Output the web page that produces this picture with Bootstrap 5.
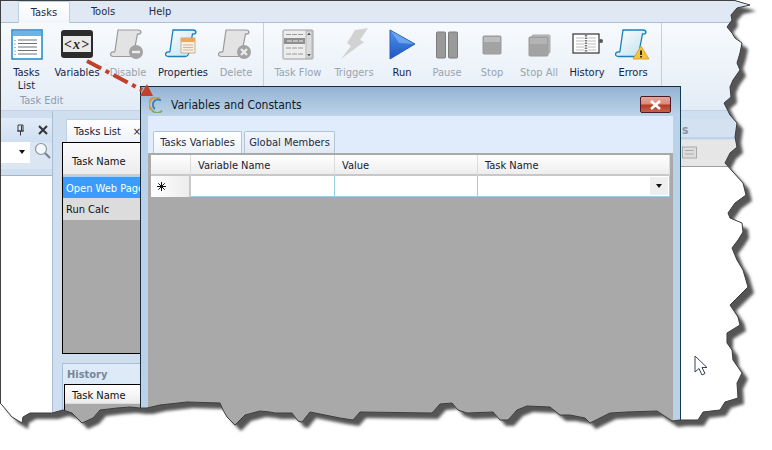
<!DOCTYPE html>
<html lang="en">
<head>
  <meta charset="UTF-8" />
  <meta name="viewport" content="width=device-width, initial-scale=1" />
  <title>Variables and Constants</title>
  <link href="https://cdn.jsdelivr.net/npm/bootstrap@5.3.0/dist/css/bootstrap.min.css" rel="stylesheet" />
  <style>
    body { background: #fff; font-family: "DejaVu Sans Condensed", "Liberation Sans", Arial, sans-serif; font-size: 11px; color: #15233c; overflow: hidden; }
    .shot { width: 772px; height: 450px; overflow: hidden; }
    .app-win { width: 745px; height: 440px; border-top: 1px solid #444; border-left: 1px solid #444; background: #d0dff0; }

    .rib-tabs { height: 22px; padding-left: 17px; background: #dfe8f3; border-bottom: 1px solid #a9c0d9; flex-wrap: nowrap; }
    .rib-tab { height: 22px; line-height: 21px; font-size: 11px; color: #1d2c4a; text-align: center; }
    .rib-tab.on { width: 52px; background: linear-gradient(#fff, #f2f6fb); border: 1px solid #bccfe3; border-bottom: 0; border-radius: 2px 2px 0 0; }
    .rib-tab.w-tools { width: 66px; }
    .rib-tab.w-help { width: 48px; }

    .rib-body { height: 88px; background: linear-gradient(#f7fafd, #e3ecf6); border-bottom: 1px solid #c3d2e3; }
    .rib-group { height: 87px; border-right: 1px solid #c3d2e3; flex: none; }
    .rib-group-a { width: 263px; }
    .rib-group-b { width: 398px; }
    .rib-btn { height: 68px; padding: 4px 0 0; border: 0; border-radius: 0; font-size: 11px; line-height: 13px; color: #16244a; flex: none; }
    .rib-btn:disabled { color: #9aa3ae; opacity: 1; }
    .rib-btn svg { display: block; margin: 0 auto 3px; width: 36px; height: 36px; flex: none; }
    .rib-caption { color: #8d9cb0; font-size: 11px; padding: 2px 0 0 19px; }

    .dock-left { width: 52px; flex: none; padding-top: 7px; border-right: 1px solid #a9bdd5; }
    .dock-head { height: 24px; background: linear-gradient(#e2ecf8, #cfdff1); color: #333; font-size: 14px; }
    .pin-gap { margin-left: 13px; }
    .dock-tools { height: 27px; background: #dbe6f3; }
    .dock-field { height: 21px; width: 29px; background: #fff; }
    .dock-list { background: #fff; margin-top: 6px; border-top: 1px solid #a9b4c0; height: 300px; }
    .dock-caret { width: 0; height: 0; border: 3.5px solid transparent; border-top: 4px solid #111; border-bottom: 0; margin: 8px 0 0 18px; }

    .dock-mid { flex: 1 1 auto; padding: 8px 0 0 9px; min-width: 0; }
    .tab-one { width: 84px; height: 23px; margin-left: 4px; padding: 4px 0 0 7px; font-size: 11px; color: #223; background: linear-gradient(#fff, #eef4fb); border: 1px solid #bcd0e6; border-bottom: 0; border-radius: 2px 2px 0 0; }
    .grid-main { height: 212px; background: #a9a9a9; border: 1px solid #000; }
    .cell-head { height: 33px; padding: 11px 0 0 9px; font-size: 11px; background: linear-gradient(#fbfbfb, #ececec); border-bottom: 2px solid #ccc; color: #111; }
    .cell-sel { height: 22px; line-height: 23px; padding-left: 3px; background: #3c9bff; color: #fff; font-size: 11px; border-top: 1px solid #a9d4ff; }
    .cell-row { height: 22px; line-height: 23px; padding-left: 3px; background: #dcdcdc; font-size: 11px; color: #111; }
    .hist-box { margin-top: 9px; height: 80px; border: 1px solid #a8bdd6; background: linear-gradient(#dfebf8, #d4e2f2); padding: 0 0 0 1px; }
    .hist-title { height: 20px; line-height: 21px; padding-left: 3px; font-weight: 700; color: #77879b; font-size: 11px; }
    .hist-grid { height: 60px; background: #a9a9a9; border-top: 1px solid #000; border-left: 1px solid #000; }
    .hist-head { height: 19px; padding: 3px 0 0 7px; font-size: 11px; background: linear-gradient(#fff, #ececec); color: #111; border-bottom: 1px solid #ddd; }

    .dock-right { width: 64px; flex: none; padding-top: 8px; }
    .right-head { height: 20px; background: #d3e1f1; color: #8a94a3; font-size: 12px; font-weight: 700; line-height: 23px; padding-left: 1px; border-bottom: 2px solid #c0d2e6; }
    .right-tools { height: 26px; margin-top: 1px; background: #e6e6e6; padding-top: 6px; }
    .right-fill { height: 300px; background: #fff; border-top: 1px solid #a0a0a0; }

    .dlg { position: absolute; left: 140px; top: 86px; width: 541px; height: 345px; border: 1px solid #1b2a38; border-bottom: 0; border-right-color: #0f3d4f; background: #b9d2ea; }
    .dlg-title { height: 29px; padding: 6px 9px 0 8px; background: linear-gradient(#94b3d2, #bdd4ea); font-size: 12px; color: #101a28; }
    .dlg-logo { margin-right: 6px; flex: none; }
    .dlg-close { width: 31px; height: 17px; padding: 0; border: 1px solid #4b1a24; border-radius: 2px; background: linear-gradient(#e3a79d 0%, #d98a7a 48%, #b23a22 52%, #c9604a 100%); }
    .dlg-client { margin: 0 7px; height: 315px; background: #e0ebfb; padding-top: 15px; }
    .dlg-tabs { padding-left: 5px; height: 22px; flex-wrap: nowrap; }
    .dlg-tab { height: 22px; line-height: 21px; font-size: 11px; color: #1c2c44; text-align: center; border: 1px solid #b3c4d8; border-bottom: 0; border-radius: 2px 2px 0 0; background: linear-gradient(#f1f5fb, #e2e9f3); }
    .dlg-tab.on { width: 89px; background: linear-gradient(#fff, #edf3fb); }
    .dlg-tab.off { width: 91px; margin-left: 2px; }
    .dlg-grid { height: 280px; background: #a9a9a9; border: 3px solid #a9a9a9; border-top: 2px solid #a9a9a9; }
    .var-table { table-layout: fixed; width: 519px; border-collapse: separate; border-spacing: 0; --bs-table-bg: transparent; }
    .var-table th, .var-table td { padding: 0 !important; border: 0; box-shadow: none !important; font-size: 11px; line-height: 13px; color: #14202f; vertical-align: middle; }
    .var-table th { height: 21px; font-weight: 400; padding-left: 7px !important; padding-top: 1px !important; background: linear-gradient(#fff, #ededed) !important; border-bottom: 2px solid #c8c8c8 !important; border-right: 1px solid #dcdcdc !important; }
    .var-table td { height: 21px; background: #fff !important; border-bottom: 1px solid #9ccfe0 !important; border-right: 1px solid #9ccfe0 !important; }
    .var-table td.mark-col { background: linear-gradient(90deg, #fff, #ececec) !important; border-right: 2px solid #c8c8c8 !important; border-bottom: 0 !important; }
    .star-svg { display: block; margin: 0 0 0 6px; }
    .drop-btn { width: 18px; height: 18px; margin-left: auto; margin-right: 1px; background: #eee; }
    .drop-tri { width: 0; height: 0; border: 3px solid transparent; border-top: 4px solid #111; border-bottom: 0; }

    .over-svg { position: absolute; left: 0; top: 0; width: 772px; height: 450px; pointer-events: none; }
    .mouse-svg { position: absolute; left: 694px; top: 355px; width: 14px; height: 21px; }
  </style>
</head>
<body>
<div class="shot position-relative">
  <svg width="0" height="0" class="position-absolute">
    <defs>
      <path id="scroll" d="M8 3H28Q31 3 31 5.500Q30.500 7.500 27.500 7L24 25Q23.500 29.500 20 29.500H3.500Q.5 29.500 .5 27Q1 24.500 4.500 25L5 24Z" />
    </defs>
  </svg>

  <div class="app-win d-flex flex-column">
    <div class="rib-tabs d-flex">
      <div class="rib-tab on">Tasks</div>
      <div class="rib-tab w-tools">Tools</div>
      <div class="rib-tab w-help">Help</div>
    </div>

    <div class="rib-body d-flex">
      <div class="rib-group rib-group-a d-flex flex-column">
        <div class="d-flex">
          <button class="btn rib-btn d-flex flex-column align-items-center" style="width:51px">
            <svg viewBox="0 0 36 36"><rect x="3" y="3" width="30" height="29" fill="#fff" stroke="#1c86c8" stroke-width="1.500"/><rect x="4" y="4" width="28" height="5" fill="#6db4e6"/><path d="M9 13H28M9 16.500H28M9 20H28M9 23.500H28M9 27H28" stroke="#6a7078"/><path d="M6 13v1M6 16.500v1M6 20v1M6 23.500v1M6 27v1" stroke="#2a7fc0"/></svg>
            <span>Tasks<br>List</span>
          </button>
          <button class="btn rib-btn d-flex flex-column align-items-center" style="width:50px">
            <svg viewBox="0 0 36 36"><rect x="2" y="3" width="32" height="28" rx="3" fill="#2c2c2c"/><rect x="4" y="9" width="28" height="16" fill="#e9e9e9"/><text x="18" y="21.500" text-anchor="middle" font-family="Liberation Serif, serif" font-weight="700" font-style="italic" font-size="14" letter-spacing="1" fill="#2a2a2a">&lt;x&gt;</text></svg>
            <span>Variables</span>
          </button>
          <button class="btn rib-btn d-flex flex-column align-items-center" disabled style="width:52px">
            <svg viewBox="0 0 36 36"><use href="#scroll" fill="#e3e3e3" stroke="#9a9a9a" stroke-width="1.200"/><circle cx="26" cy="25" r="7" fill="#a3a3a3"/><rect x="22" y="23.800" width="8" height="2.400" fill="#eee"/></svg>
            <span>Disable</span>
          </button>
          <button class="btn rib-btn d-flex flex-column align-items-center" style="width:58px">
            <svg viewBox="0 0 36 36"><defs><linearGradient id="pg" x1="0" x2="1" y1="0" y2="1"><stop offset="0" stop-color="#fff"/><stop offset="1" stop-color="#bfe0ee"/></linearGradient></defs><use href="#scroll" fill="url(#pg)" stroke="#1a80bc" stroke-width="1.300"/><rect x="16" y="11" width="14" height="15" fill="#f8efe0" stroke="#b9a27f" stroke-width=".8"/><rect x="16" y="11" width="14" height="4" fill="#f2a65a"/><path d="M18 18H28M18 20.500H28M18 23H28" stroke="#c9b99c"/></svg>
            <span>Properties</span>
          </button>
          <button class="btn rib-btn d-flex flex-column align-items-center" disabled style="width:48px">
            <svg viewBox="0 0 36 36"><use href="#scroll" fill="#e3e3e3" stroke="#9a9a9a" stroke-width="1.200"/><circle cx="26" cy="25" r="7" fill="#a3a3a3"/><path d="M23 22L29 28M29 22L23 28" stroke="#eee" stroke-width="2.200"/></svg>
            <span>Delete</span>
          </button>
        </div>
        <div class="rib-caption">Task Edit</div>
      </div>

      <div class="rib-group rib-group-b d-flex">
        <button class="btn rib-btn d-flex flex-column align-items-center" disabled style="width:68px">
          <svg viewBox="0 0 36 36"><rect x="3" y="3" width="30" height="29" rx="1" fill="#ececec" stroke="#9c9c9c"/><rect x="4" y="11" width="21" height="6" fill="#8f8f8f"/><path d="M6 7.500H23M6 21H23M6 27H23" stroke="#9a9a9a" stroke-dasharray="5 1"/><path d="M7 14H23" stroke="#eee" stroke-dasharray="5 1"/><rect x="26" y="4" width="6" height="27" fill="#dcdcdc" stroke="#a3a3a3" stroke-width=".7"/><path d="M29 5.500l-1.800 2.500h3.600zM29 29.500l-1.800-2.500h3.600z" fill="#555"/></svg>
          <span>Task Flow</span>
        </button>
        <button class="btn rib-btn d-flex flex-column align-items-center" disabled style="width:44px">
          <svg viewBox="0 0 36 36"><path d="M19 3L32 1L24 13L28 15L5 32L15 19L11 16Z" fill="#d2d2d2"/></svg>
          <span>Triggers</span>
        </button>
        <button class="btn rib-btn d-flex flex-column align-items-center" style="width:52px">
          <svg viewBox="0 0 36 36"><defs><linearGradient id="rn" x1="0" x2="0" y1="0" y2="1"><stop offset="0" stop-color="#4f95ee"/><stop offset="1" stop-color="#1c56c0"/></linearGradient></defs><path d="M6 3L31 17L6 32Z" fill="url(#rn)" stroke="#2a5fb5"/><path d="M7 4L30 17L15 16Z" fill="#7fb2f3" opacity=".7"/></svg>
          <span>Run</span>
        </button>
        <button class="btn rib-btn d-flex flex-column align-items-center" disabled style="width:38px">
          <svg viewBox="0 0 36 36"><rect x="7.500" y="5" width="9" height="26" rx="1" fill="#9a9a9a" stroke="#7d7d7d"/><rect x="19.500" y="5" width="9" height="26" rx="1" fill="#9a9a9a" stroke="#7d7d7d"/></svg>
          <span>Pause</span>
        </button>
        <button class="btn rib-btn d-flex flex-column align-items-center" disabled style="width:52px">
          <svg viewBox="0 0 36 36"><rect x="9" y="9" width="18" height="18" rx="1" fill="#a3a3a3" stroke="#9a9a9a"/><rect x="10" y="10" width="16" height="5" fill="#bdbdbd"/></svg>
          <span>Stop</span>
        </button>
        <button class="btn rib-btn d-flex flex-column align-items-center" disabled style="width:42px">
          <svg viewBox="0 0 36 36"><rect x="11" y="8" width="18" height="18" rx="1" fill="#bcbcbc" stroke="#aaa"/><rect x="8" y="10" width="19" height="19" rx="1" fill="#a3a3a3" stroke="#9a9a9a"/><rect x="9" y="11" width="17" height="6" fill="#b4b4b4"/></svg>
          <span>Stop All</span>
        </button>
        <button class="btn rib-btn d-flex flex-column align-items-center" style="width:54px">
          <svg viewBox="0 0 36 36"><rect x="4" y="7" width="26" height="19" fill="#fff" stroke="#333" stroke-width="1.200"/><path d="M7 11H15M7 14H15M7 17H15M7 20H15M7 23H15M19 11H27M19 14H27M19 17H27M19 20H27M19 23H27" stroke="#bbb"/><path d="M17 8V25" stroke="#777" stroke-width="2.500" stroke-dasharray="1.500 1"/><circle cx="32" cy="14" r="2" fill="#555"/></svg>
          <span>History</span>
        </button>
        <button class="btn rib-btn d-flex flex-column align-items-center" style="width:38px">
          <svg viewBox="0 0 36 36"><defs><linearGradient id="er" x1="0" x2="1" y1="0" y2="1"><stop offset="0" stop-color="#fff"/><stop offset="1" stop-color="#bfe0ee"/></linearGradient></defs><use href="#scroll" fill="url(#er)" stroke="#1a80bc" stroke-width="1.300"/><path d="M26 19L34 32H18Z" fill="#f7c437" stroke="#d99a20" stroke-width=".8"/><path d="M26 23.500V28M26 29V30.500" stroke="#222" stroke-width="1.800"/></svg>
          <span>Errors</span>
        </button>
      </div>
    </div>

    <div class="d-flex flex-grow-1 overflow-hidden">
      <div class="dock-left">
        <div class="dock-head d-flex align-items-center">
          <svg class="ms-auto" width="9" height="12" viewBox="0 0 9 12"><path d="M2 1H7V7H2ZM1 7H8M4.500 7V11.500M5.500 1.500V7" fill="none" stroke="#3a3a3a"/></svg>
          <svg class="pin-gap me-1" width="10" height="10" viewBox="0 0 10 10"><path d="M1 1L9 9M9 1L1 9" stroke="#333" stroke-width="2"/></svg>
        </div>
        <div class="dock-tools d-flex">
          <div class="dock-field"><div class="dock-caret"></div></div>
          <svg class="ms-1" width="18" height="20" viewBox="0 0 18 20"><circle cx="7" cy="7" r="5.500" fill="#f4f8fc" stroke="#8b96a3" stroke-width="1.200"/><path d="M11 11L16 16" stroke="#7a838e" stroke-width="2.200"/></svg>
        </div>
        <div class="dock-list"></div>
      </div>

      <div class="dock-mid">
        <div class="tab-one d-flex justify-content-between">Tasks List <span class="pe-2">×</span></div>
        <div class="grid-main">
          <div class="cell-head">Task Name</div>
          <div class="cell-sel">Open Web Page</div>
          <div class="cell-row">Run Calc</div>
        </div>
        <div class="hist-box">
          <div class="hist-title">History</div>
          <div class="hist-grid"><div class="hist-head">Task Name</div></div>
        </div>
      </div>

      <div class="dock-right">
        <div class="right-head">s</div>
        <div class="right-tools">
          <svg class="d-block" width="16" height="14" viewBox="0 0 16 14"><rect x="1.500" y="1" width="14" height="11" fill="#ddd" stroke="#aaa"/><path d="M4 4.500H13M4 8H13" stroke="#aaa"/></svg>
        </div>
        <div class="right-fill"></div>
      </div>
    </div>
  </div>

  <div class="dlg">
    <div class="dlg-title d-flex align-items-center">
      <svg width="16" height="16" viewBox="0 0 16 16" class="dlg-logo"><path d="M11 1.500A7 7 0 0 0 3 13" fill="none" stroke="#d8963c" stroke-width="2.400"/><path d="M3 13A6 6 0 0 0 13 13.500" fill="none" stroke="#7fae5a" stroke-width="1.800"/><path d="M12 3.500A5 5 0 0 0 6 12" fill="none" stroke="#2f7fb8" stroke-width="1.800"/></svg>
      <span>Variables and Constants</span>
      <button class="btn dlg-close ms-auto d-flex align-items-center justify-content-center" aria-label="Close">
        <svg width="13" height="10" viewBox="0 0 13 10"><path d="M2 1L11 9M11 1L2 9" stroke="#fff" stroke-width="2.600"/></svg>
      </button>
    </div>
    <div class="dlg-client">
      <div class="dlg-tabs d-flex">
        <div class="dlg-tab on">Tasks Variables</div>
        <div class="dlg-tab off">Global Members</div>
      </div>
      <div class="dlg-grid">
        <table class="table var-table mb-0">
          <colgroup><col style="width:40px"><col style="width:144px"><col style="width:143px"><col></colgroup>
          <thead>
            <tr><th></th><th>Variable Name</th><th>Value</th><th>Task Name</th></tr>
          </thead>
          <tbody>
            <tr>
              <td class="mark-col"><svg class="star-svg" width="9" height="9" viewBox="0 0 9 9"><path d="M4.500 0V9M0 4.500H9M1.300 1.300L7.700 7.700M7.700 1.300L1.300 7.700" stroke="#111" stroke-width="1"/></svg></td><td></td><td></td>
              <td><div class="drop-btn d-flex align-items-center justify-content-center"><div class="drop-tri"></div></div></td>
            </tr>
          </tbody>
        </table>
      </div>
    </div>
  </div>

  <svg class="mouse-svg" viewBox="0 0 14 21"><path d="M1 1V17L5 13.500L8 20L11 18.500L8 12.500H13Z" fill="#fff" stroke="#3a4258"/></svg>

  <svg class="over-svg" viewBox="0 0 772 450">
    <defs>
      <filter id="soft" x="-5%" y="-5%" width="110%" height="110%"><feGaussianBlur stdDeviation="1.800"/></filter>
      <path id="torn" d="M0 0L733 0L750 5L737 8L731 15L732 20L727 27L732 33L735 38L742 43L740 53L737 63L740 70L733 80L730 87L731 97L724 103L730 115L737 123L735 137L737 147L730 153L725 163L733 172L743 183L746 195L735 203L728 213L730 218L742 223L743 232L738 240L732 248L737 260L743 270L748 287L730 305L738 317L740 325L727 333L727 343L732 350L733 360L742 373L737 383L738 398L725 402L720 410L703 412L698 420L680 420L672 421L663 415L657 411L627 412L610 413L600 418L590 423L585 418L570 415L560 415L550 407L527 406L517 410L508 420L500 420L493 412L467 413L458 410L452 403L440 404L432 413L360 412L353 420L340 418L315 413L310 412L302 422L298 421L292 413L275 413L270 412L260 411L245 415L235 425L227 417L223 410L220 403L187 402L160 405L147 408L140 408L130 407L117 408L100 410L93 418L82 423L72 413L63 410L52 413L37 413L30 413L23 417L22 423L12 417L2 405L0 403Z"/>
      <clipPath id="outside"><path clip-rule="evenodd" d="M-10 -10H790V470H-10ZM0 0L733 0L750 5L737 8L731 15L732 20L727 27L732 33L735 38L742 43L740 53L737 63L740 70L733 80L730 87L731 97L724 103L730 115L737 123L735 137L737 147L730 153L725 163L733 172L743 183L746 195L735 203L728 213L730 218L742 223L743 232L738 240L732 248L737 260L743 270L748 287L730 305L738 317L740 325L727 333L727 343L732 350L733 360L742 373L737 383L738 398L725 402L720 410L703 412L698 420L680 420L672 421L663 415L657 411L627 412L610 413L600 418L590 423L585 418L570 415L560 415L550 407L527 406L517 410L508 420L500 420L493 412L467 413L458 410L452 403L440 404L432 413L360 412L353 420L340 418L315 413L310 412L302 422L298 421L292 413L275 413L270 412L260 411L245 415L235 425L227 417L223 410L220 403L187 402L160 405L147 408L140 408L130 407L117 408L100 410L93 418L82 423L72 413L63 410L52 413L37 413L30 413L23 417L22 423L12 417L2 405L0 403Z"/></clipPath>
    </defs>
    <rect x="-10" y="-10" width="790" height="470" fill="#fff" clip-path="url(#outside)"/>
    <g clip-path="url(#outside)"><use href="#torn" transform="translate(6 6)" fill="#555" filter="url(#soft)"/></g>
    <use href="#torn" fill="none" stroke="#3c3c3c" stroke-width="1"/>
    <path d="M87 61L142 90" stroke="#c2402a" stroke-width="4" stroke-dasharray="16 5 4 5"/>
    <path d="M153 96L140 96L147 84Z" fill="#c2402a"/>
  </svg>
</div>
<script src="https://cdn.jsdelivr.net/npm/bootstrap@5.3.0/dist/js/bootstrap.bundle.min.js"></script>
</body>
</html>
